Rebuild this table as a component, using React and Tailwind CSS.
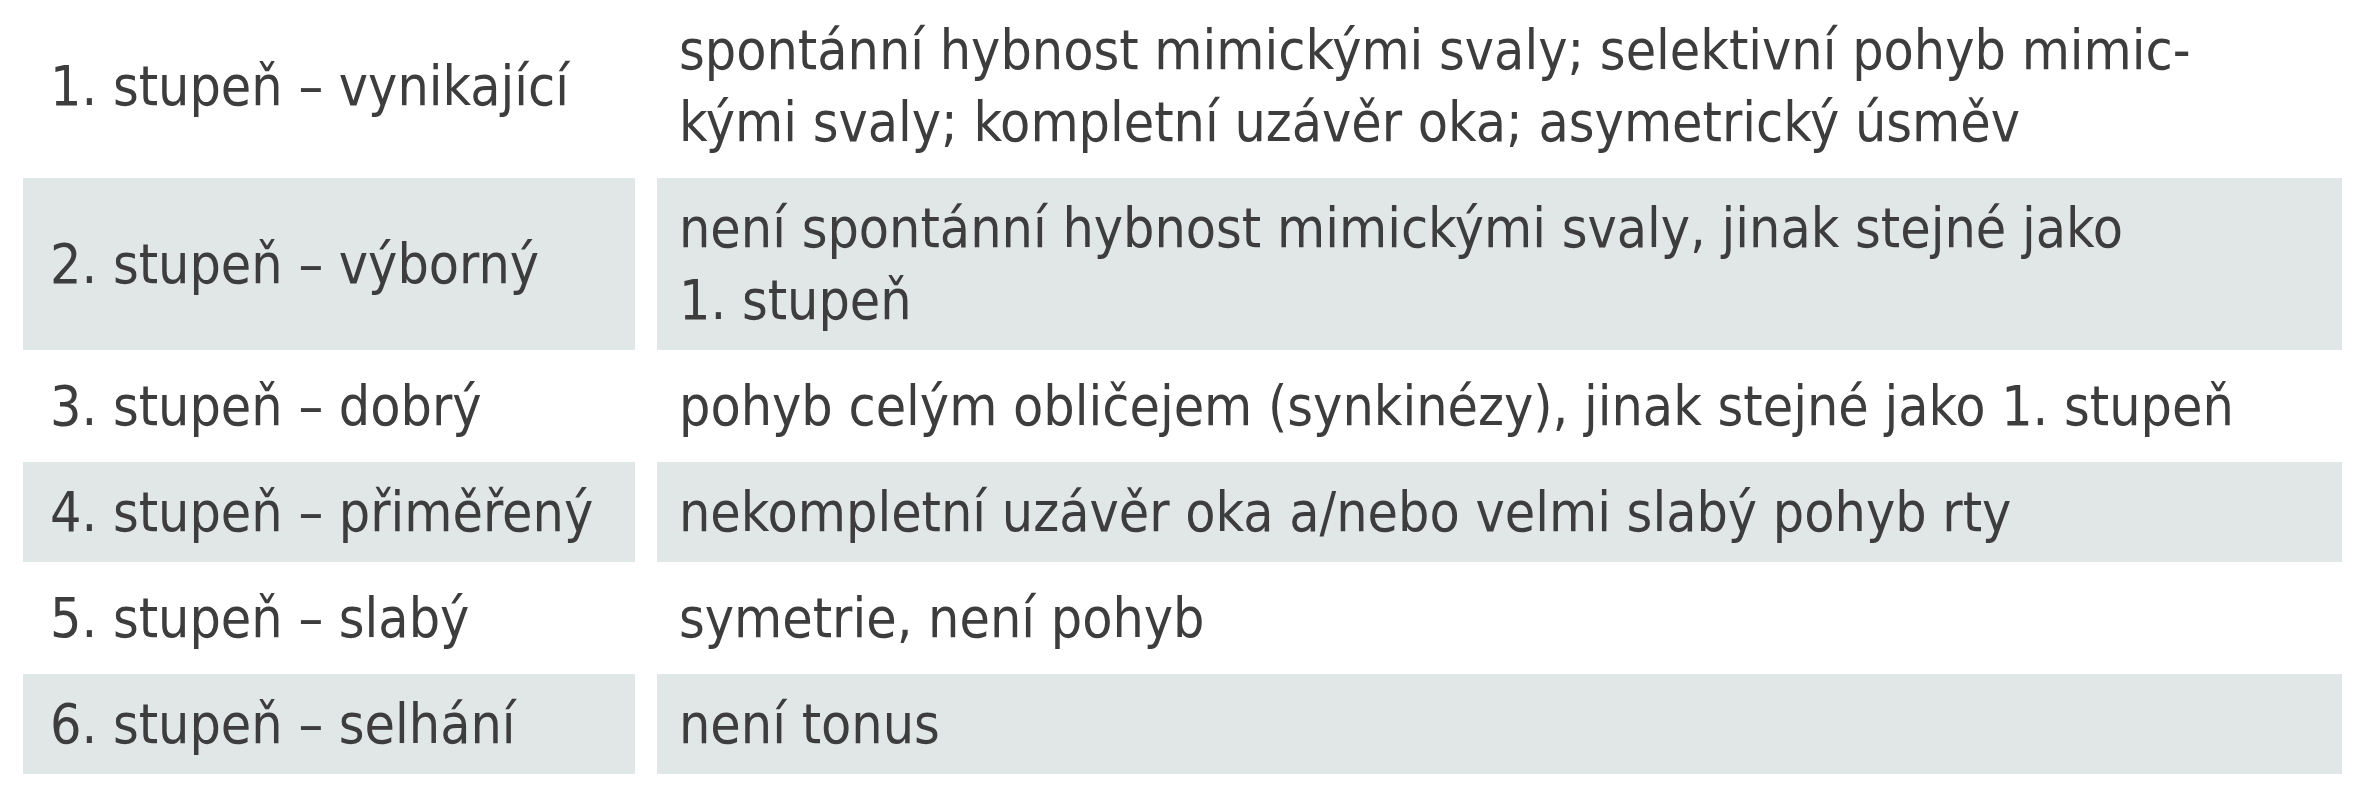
import React from 'react';

const rows = [
  {
    grade: '1. stupeň – vynikající',
    desc: ['spontánní hybnost mimickými svaly; selektivní pohyb mimic-', 'kými svaly; kompletní uzávěr oka; asymetrický úsměv'],
    shaded: false,
  },
  {
    grade: '2. stupeň – výborný',
    desc: ['není spontánní hybnost mimickými svaly, jinak stejné jako', '1. stupeň'],
    shaded: true,
  },
  {
    grade: '3. stupeň – dobrý',
    desc: ['pohyb celým obličejem (synkinézy), jinak stejné jako 1. stupeň'],
    shaded: false,
  },
  {
    grade: '4. stupeň – přiměřený',
    desc: ['nekompletní uzávěr oka a/nebo velmi slabý pohyb rty'],
    shaded: true,
  },
  {
    grade: '5. stupeň – slabý',
    desc: ['symetrie, není pohyb'],
    shaded: false,
  },
  {
    grade: '6. stupeň – selhání',
    desc: ['není tonus'],
    shaded: true,
  },
];

const App = () => {
  return (
    <div
      className="w-[2365px] h-[800px] bg-white text-[#3d3d3d] text-[55px] leading-[72px] overflow-hidden"
      style={{ fontFamily: '"DejaVu Sans Condensed", "Liberation Sans Narrow", "Liberation Sans", sans-serif' }}
    >
      {/* Grade table */}
      <div className="grid grid-cols-[612px_1685px] gap-x-[22px] gap-y-[6px] pl-[23px]">
        {rows.map((row) => (
          <React.Fragment key={row.grade}>
            <div
              className={`flex items-center py-[14px] pl-[27px] whitespace-nowrap ${row.shaded ? 'bg-[#e1e6e7]' : ''}`}
            >
              {row.grade}
            </div>
            <div className={`py-[14px] pl-[22px] whitespace-nowrap ${row.shaded ? 'bg-[#e1e6e7]' : ''}`}>
              {row.desc.map((line) => (
                <div key={line}>{line}</div>
              ))}
            </div>
          </React.Fragment>
        ))}
      </div>
    </div>
  );
};

export default App;
